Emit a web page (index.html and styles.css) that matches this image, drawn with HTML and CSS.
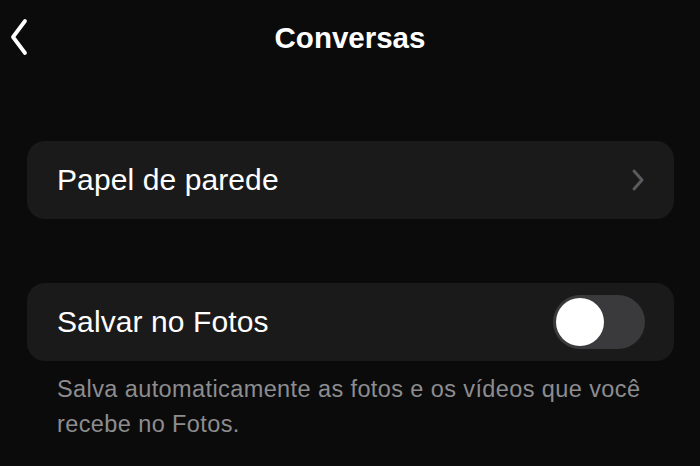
FILE: index.html
```html
<!DOCTYPE html>
<html lang="pt-BR">
<head>
  <meta charset="UTF-8">
  <title>Conversas</title>
  <link rel="stylesheet" href="styles.css">
</head>
<body>
  <header class="nav">
    <button class="back" aria-label="Voltar">
      <svg width="20" height="40" viewBox="0 0 20 40">
        <polyline points="15,3 3,19 15,35" fill="none" stroke="#fff" stroke-width="3.8" stroke-linecap="round" stroke-linejoin="round"/>
      </svg>
    </button>
    <h1 class="title">Conversas</h1>
    <span></span>
  </header>

  <main class="content">
    <section class="group">
      <div class="row">
        <span class="label">Papel de parede</span>
        <svg class="chevron" width="14" height="24" viewBox="0 0 14 24">
          <polyline points="3,3 11,12 3,21" fill="none" stroke="#5b5b5f" stroke-width="3" stroke-linecap="round" stroke-linejoin="round"/>
        </svg>
      </div>
    </section>

    <section class="group second">
      <div class="row">
        <span class="label">Salvar no Fotos</span>
        <span class="toggle"><span class="knob"></span></span>
      </div>
      <p class="note">Salva automaticamente as fotos e os vídeos que você recebe no Fotos.</p>
    </section>
  </main>
</body>
</html>
```

FILE: styles.css
```css
body {
  margin: 0;
  background: #0b0b0b;
  color: #fff;
  font-family: "Liberation Sans", Arial, sans-serif;
  height: 466px;
  overflow: hidden;
}
.nav {
  height: 76px;
  display: grid;
  grid-template-columns: 1fr auto 1fr;
  align-items: center;
}
.back {
  justify-self: start;
  background: none;
  border: 0;
  padding: 0 0 0 10px;
  display: flex;
}
.title {
  margin: 0;
  font-size: 29.5px;
  font-weight: bold;
}
.content {
  padding: 0 26px 0 27px;
}
.group {
  margin-top: 65px;
}
.group.second {
  margin-top: 64px;
}
.row {
  height: 78px;
  box-sizing: border-box;
  background: #1a1a1b;
  border-radius: 18px;
  padding: 0 28px 0 30px;
  display: flex;
  align-items: center;
  justify-content: space-between;
}
.label {
  font-size: 30px;
  letter-spacing: 0.1px;
}
.chevron {
  margin-right: 1px;
}
.toggle {
  width: 92px;
  height: 54px;
  border-radius: 27px;
  background: #3a3a3c;
  padding: 3px;
  box-sizing: border-box;
  display: flex;
  margin-right: 1px;
}
.knob {
  width: 48px;
  height: 48px;
  border-radius: 50%;
  background: #fff;
}
.note {
  margin: 11px 0 0;
  padding: 0 30px;
  font-size: 23.5px;
  line-height: 35px;
  color: #8d8d90;
  letter-spacing: 0.4px;
}
```
